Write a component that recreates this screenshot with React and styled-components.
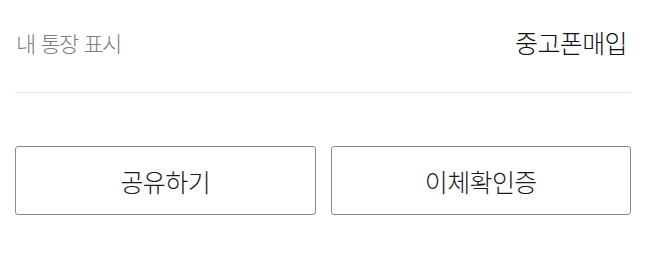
import styled, { createGlobalStyle } from "styled-components";

const GlobalStyle = createGlobalStyle`
  body {
    margin: 0;
    background: #fff;
    font-family: "Noto Sans CJK KR", "Noto Sans", sans-serif;
  }
`;

const Wrap = styled.div`
  padding: 0 15px;
`;

const InfoRow = styled.div`
  display: flex;
  justify-content: space-between;
  align-items: center;
  height: 93px;
  padding: 0 4px 0 1px;
  border-bottom: 1px solid #e8e8e8;
  box-sizing: border-box;
`;

const Label = styled.span`
  font-size: ${(p) => (p.$muted ? "22px" : "25px")};
  font-weight: 300;
  color: ${(p) => (p.$muted ? "#808080" : "#111")};
  letter-spacing: ${(p) => (p.$muted ? "-1.8px" : "-0.6px")};
  word-spacing: ${(p) => (p.$muted ? "3px" : "0")};
  padding-bottom: 8px;
`;

const Buttons = styled.div`
  display: flex;
  gap: 15px;
  margin-top: 53px;
`;

const Button = styled.button`
  flex: 1;
  height: 69px;
  background: #fff;
  border: 1px solid #8a8a8a;
  border-radius: 3px;
  font-family: inherit;
  font-size: 25px;
  font-weight: 300;
  color: #1a1a1a;
  letter-spacing: -0.6px;
`;

export default function App() {
  return (
    <>
      <GlobalStyle />
      <Wrap>
        <InfoRow>
          <Label $muted>내 통장 표시</Label>
          <Label>중고폰매입</Label>
        </InfoRow>
        <Buttons>
          <Button>공유하기</Button>
          <Button>이체확인증</Button>
        </Buttons>
      </Wrap>
    </>
  );
}
